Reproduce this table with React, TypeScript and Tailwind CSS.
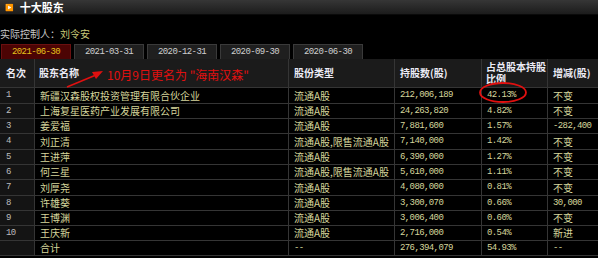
import React from "react";

type Row = {
  rank: string;
  name: string;
  kind: string;
  shares: string;
  pct: string;
  change: string;
  tall?: boolean;
};

const rows: Row[] = [
  { rank: "1", name: "新疆汉森股权投资管理有限合伙企业", kind: "流通A股", shares: "212,006,189", pct: "42.13%", change: "不变", tall: true },
  { rank: "2", name: "上海复星医药产业发展有限公司", kind: "流通A股", shares: "24,263,820", pct: "4.82%", change: "不变" },
  { rank: "3", name: "姜爱福", kind: "流通A股", shares: "7,881,600", pct: "1.57%", change: "-282,400" },
  { rank: "4", name: "刘正清", kind: "流通A股,限售流通A股", shares: "7,140,000", pct: "1.42%", change: "不变", tall: true },
  { rank: "5", name: "王进萍", kind: "流通A股", shares: "6,390,000", pct: "1.27%", change: "不变" },
  { rank: "6", name: "何三星", kind: "流通A股,限售流通A股", shares: "5,610,000", pct: "1.11%", change: "不变" },
  { rank: "7", name: "刘厚尧", kind: "流通A股", shares: "4,080,000", pct: "0.81%", change: "不变", tall: true },
  { rank: "8", name: "许雄葵", kind: "流通A股", shares: "3,300,070", pct: "0.66%", change: "30,000" },
  { rank: "9", name: "王博渊", kind: "流通A股", shares: "3,006,400", pct: "0.60%", change: "不变" },
  { rank: "10", name: "王庆新", kind: "流通A股", shares: "2,716,000", pct: "0.54%", change: "新进" },
  { rank: "", name: "合计", kind: "--", shares: "276,394,079", pct: "54.93%", change: "--" },
];

const tabs = ["2021-06-30", "2021-03-31", "2020-12-31", "2020-09-30", "2020-06-30"];

const cjk = "font-['Noto_Sans_CJK_SC',sans-serif] text-[10px]";
const mono = "font-['Liberation_Mono',monospace] text-[9px] tracking-[-0.6px]";
const isNum = (s: string) => /^[-\d,.%]+$/.test(s);

const Cell = ({ text, className = "" }: { text: string; className?: string }) => (
  <div className={`min-h-0 flex items-center leading-none border-r border-b border-[#353535] pl-[5px] overflow-hidden whitespace-nowrap text-[#d6d69c] ${isNum(text) ? mono : cjk} ${className}`}>
    {text}
  </div>
);

const head = `leading-none whitespace-nowrap bg-[#1b1b1b] border-b border-[#353535] ${cjk} font-bold text-[#ececf6]`;

export default function App() {
  return (
    <div className="relative w-[598px] h-[258px] bg-black overflow-hidden">
      <div className="h-[15px] flex items-center gap-[6px] pl-[5px] bg-gradient-to-b from-[#363636] to-[#1c1c1c] border-b border-[#0a0a0a]">
        <span className="text-[7px] text-[#dddddd] leading-none">▶</span>
        <span className={`${cjk} text-[11px] font-bold text-white leading-none`}>十大股东</span>
      </div>

      <div className={`${cjk} h-[29px] flex items-center text-[#c8c8c8] leading-none pt-[8px]`}>
        实际控制人：<span className="text-[#cccc7a]">刘令安</span>
      </div>

      <div className="flex gap-[3px] pl-px h-[15px]">
        {tabs.map((t, i) => (
          <div
            key={t}
            className={`w-[70px] flex items-center justify-center leading-none border-t border-x ${mono} text-[9.5px] ${
              i === 0
                ? "bg-[#4c0404] border-[#6a1010] text-[#e6c21a]"
                : "bg-[#1f1f1f] border-[#3a3a3a] text-[#cfcfcf]"
            }`}
          >
            {t}
          </div>
        ))}
      </div>

      <div className="grid grid-cols-[35px_254px_106px_87px_66px_50px]">
        <div className={`h-[29px] flex items-center pl-[6px] border-r ${head}`}>名次</div>
        <div className={`flex items-center pl-[4px] border-r ${head}`}>股东名称</div>
        <div className={`flex items-center pl-[5px] border-r ${head}`}>股份类型</div>
        <div className={`flex items-center pl-[5px] border-r ${head}`}>持股数(股)</div>
        <div className={`flex flex-col justify-center pl-[4px] border-r ${head}`}>
          <span className="leading-[12px]">占总股本持股</span>
          <span className="leading-[12px]">比例</span>
        </div>
        <div className={`flex items-center pl-[5px] ${head}`}>增减(股)</div>

        {rows.map((r) => (
          <React.Fragment key={r.rank + r.name}>
            <div className={`${r.tall ? "h-[16px]" : "h-[15px]"} flex items-center leading-none pl-[6px] bg-[#141414] border-r border-b border-[#353535] ${mono} text-[#bdbdbd]`}>
              {r.rank}
            </div>
            <Cell text={r.name} className="pl-[4px]" />
            <Cell text={r.kind} />
            <Cell text={r.shares} />
            <Cell text={r.pct} />
            <Cell text={r.change} className="border-r-0" />
          </React.Fragment>
        ))}
      </div>

      <div className="absolute left-[107px] top-[69px] font-['Noto_Sans_CJK_SC',sans-serif] text-[12px] leading-none text-[#e01010]">
        10月9日更名为 "海南汉森"
      </div>

      <svg className="absolute left-0 top-0 pointer-events-none" width="598" height="258">
        <line x1="67" y1="87" x2="96" y2="75" stroke="#e01010" strokeWidth="1.6" />
        <polygon points="103,71 92,72 96,79" fill="#e01010" />
        <ellipse cx="503" cy="92.5" rx="23" ry="9.5" fill="none" stroke="#e01010" strokeWidth="1.8" />
      </svg>
    </div>
  );
}
